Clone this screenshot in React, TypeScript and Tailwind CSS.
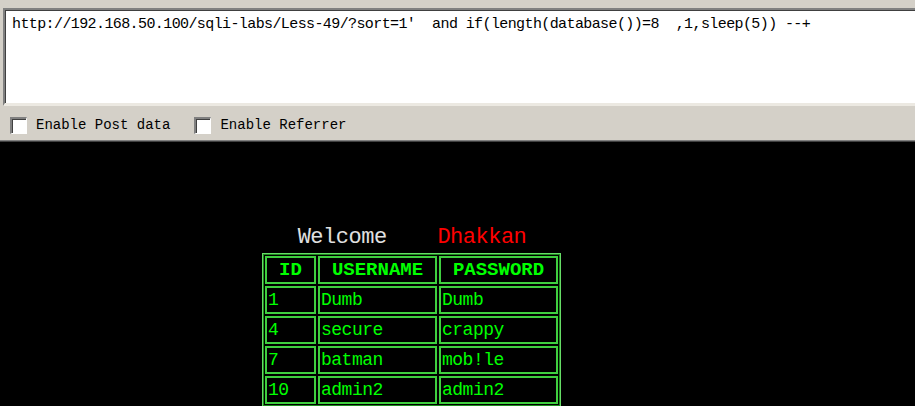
const url = "http://192.168.50.100/sqli-labs/Less-49/?sort=1'  and if(length(database())=8  ,1,sleep(5)) --+";

const rows = [
  ['1', 'Dumb', 'Dumb'],
  ['4', 'secure', 'crappy'],
  ['7', 'batman', 'mob!le'],
  ['10', 'admin2', 'admin2'],
];

function Checkbox({ label }: { label: string }) {
  return (
    <label className="flex items-center gap-[9px]">
      <span className="block w-[17px] h-[17px] bg-white border-t-2 border-l-2 border-t-[#808080] border-l-[#808080] border-b border-r border-b-[#ffffff] border-r-[#ffffff] shadow-[inset_1px_1px_0_#404040]" />
      <span className="text-[14px] text-black whitespace-pre">{label}</span>
    </label>
  );
}

export default function App() {
  return (
    <div className="w-[915px] h-[406px] overflow-hidden bg-black font-[Liberation_Mono,monospace]">
      {/* HackBar panel */}
      <div className="bg-[#d4d0c8] pt-[8px]">
        <div className="ml-[3px] h-[98px] bg-white border-t-2 border-l-2 border-t-[#808080] border-l-[#808080] border-b-[3px] border-b-[#ece9e2] shadow-[inset_1px_1px_0_#404040]">
          <div className="pl-[7px] pt-[6px] text-[15px] tracking-[-0.6px] text-black whitespace-pre leading-[18px]">
            {url}
          </div>
        </div>
        <div className="h-[34px] flex items-center gap-[24px] pl-[10px] pt-[5px]">
          <Checkbox label="Enable Post data" />
          <Checkbox label="Enable Referrer" />
        </div>
        <div className="h-[2px] border-t border-t-[#808080] bg-[#404040]" />
      </div>

      {/* page body */}
      <div className="pl-[262px] pt-[83px]">
        <div className="w-[300px] flex justify-center text-[22px] tracking-[-0.5px] leading-[26px] whitespace-pre">
          <span className="text-[#e0e0e0]">Welcome    </span>
          <span className="text-[#ff0000]">Dhakkan</span>
        </div>
        <table className="mt-[2px] border-separate border-spacing-[2px] border border-[#66dd66] shadow-[inset_0_0_0_1px_#1e8a1e] text-[#00ff00]">
          <thead>
            <tr>
              <th className="w-[51px] h-[28px] p-0 border-2 border-[#3fcf3f] text-[19px] leading-[20px] font-bold text-center">ID</th>
              <th className="w-[119px] h-[28px] p-0 border-2 border-[#3fcf3f] text-[19px] leading-[20px] font-bold text-center">USERNAME</th>
              <th className="w-[119px] h-[28px] p-0 border-2 border-[#3fcf3f] text-[19px] leading-[20px] font-bold text-center">PASSWORD</th>
            </tr>
          </thead>
          <tbody>
            {rows.map((r) => (
              <tr key={r[0]}>
                {r.map((c, i) => (
                  <td
                    key={i}
                    className="h-[28px] p-0 pl-[1px] border-2 border-[#3fcf3f] text-[18px] tracking-[-0.5px] leading-[20px] text-left"
                  >
                    {c}
                  </td>
                ))}
              </tr>
            ))}
          </tbody>
        </table>
      </div>
    </div>
  );
}
